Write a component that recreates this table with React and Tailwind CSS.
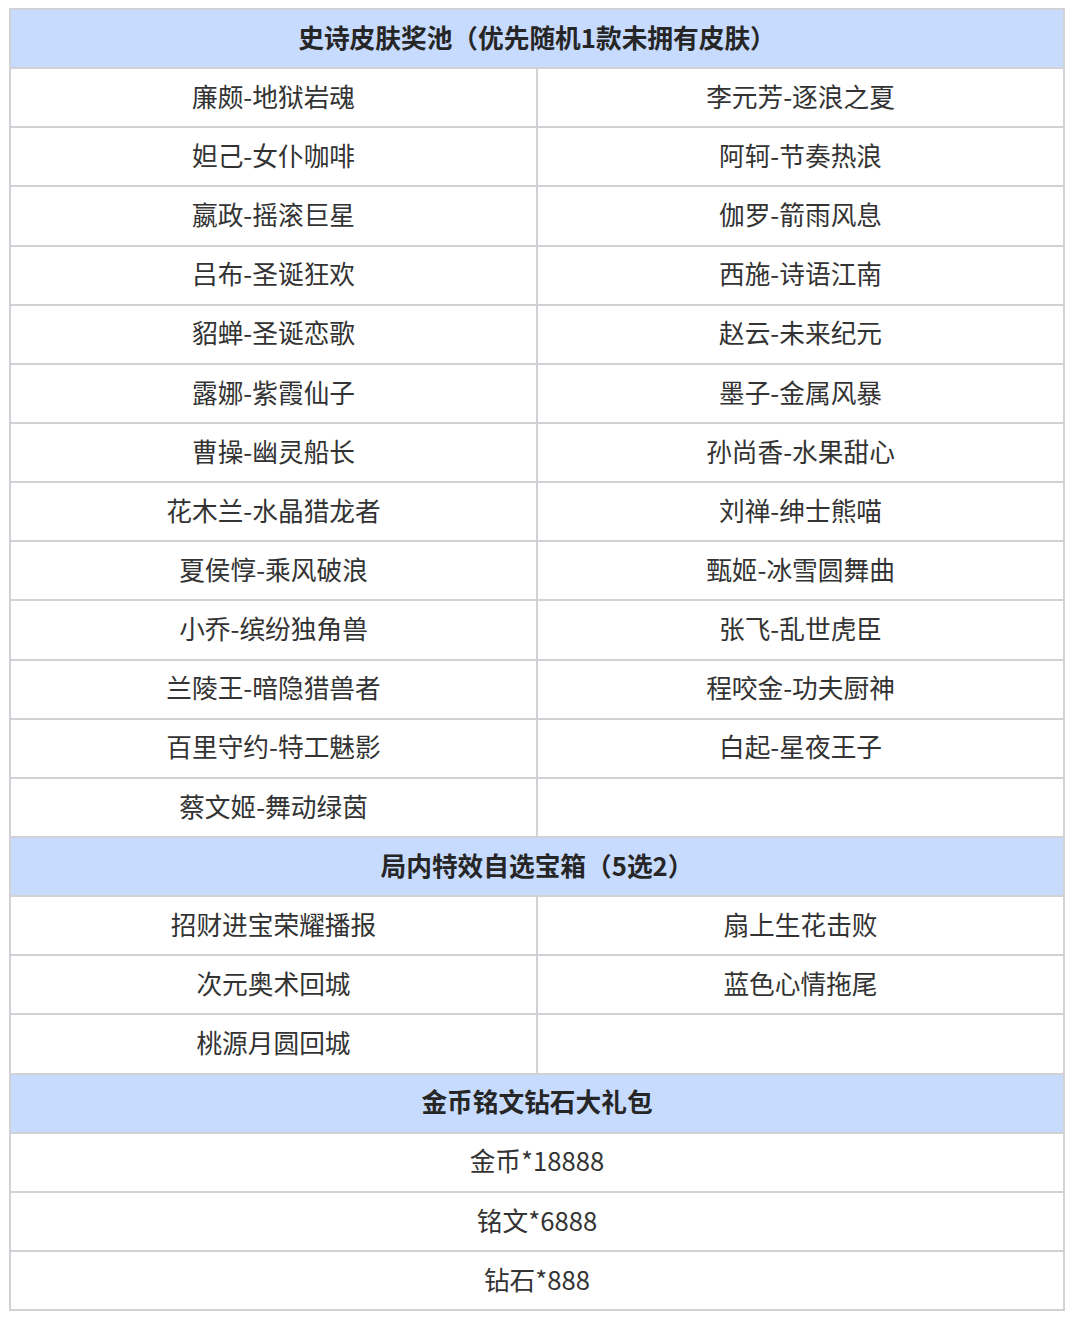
const skins = [
  ["廉颇-地狱岩魂", "李元芳-逐浪之夏"],
  ["妲己-女仆咖啡", "阿轲-节奏热浪"],
  ["嬴政-摇滚巨星", "伽罗-箭雨风息"],
  ["吕布-圣诞狂欢", "西施-诗语江南"],
  ["貂蝉-圣诞恋歌", "赵云-未来纪元"],
  ["露娜-紫霞仙子", "墨子-金属风暴"],
  ["曹操-幽灵船长", "孙尚香-水果甜心"],
  ["花木兰-水晶猎龙者", "刘禅-绅士熊喵"],
  ["夏侯惇-乘风破浪", "甄姬-冰雪圆舞曲"],
  ["小乔-缤纷独角兽", "张飞-乱世虎臣"],
  ["兰陵王-暗隐猎兽者", "程咬金-功夫厨神"],
  ["百里守约-特工魅影", "白起-星夜王子"],
  ["蔡文姬-舞动绿茵", ""],
];

const effects = [
  ["招财进宝荣耀播报", "扇上生花击败"],
  ["次元奥术回城", "蓝色心情拖尾"],
  ["桃源月圆回城", ""],
];

const gifts = ["金币*18888", "铭文*6888", "钻石*888"];

const cell = "border-2 border-[#d2d2d6] text-center align-middle pb-[4px]";

const Header = ({ children }) => (
  <tr className="h-[59.15px]">
    <td colSpan={2} className={`${cell} bg-[#c6dbfd] font-bold text-[#262626]`}>
      {children}
    </td>
  </tr>
);

const App = () => {
  return (
    <div
      className="bg-white pl-[9px] pt-[8px] text-[25.7px] leading-none text-[#333]"
      style={{ fontFamily: '"Noto Sans CJK SC", "Noto Sans", sans-serif' }}
    >
      <table className="w-[1056px] border-collapse table-fixed">
        <tbody>
          <Header>史诗皮肤奖池（优先随机1款未拥有皮肤）</Header>
          {skins.map(([a, b], i) => (
            <tr key={i} className="h-[59.15px]">
              <td className={cell}>{a}</td>
              <td className={cell}>{b}</td>
            </tr>
          ))}
          <Header>局内特效自选宝箱（5选2）</Header>
          {effects.map(([a, b], i) => (
            <tr key={i} className="h-[59.15px]">
              <td className={cell}>{a}</td>
              <td className={cell}>{b}</td>
            </tr>
          ))}
          <Header>金币铭文钻石大礼包</Header>
          {gifts.map((g, i) => (
            <tr key={i} className="h-[59.15px]">
              <td colSpan={2} className={cell}>{g}</td>
            </tr>
          ))}
        </tbody>
      </table>
    </div>
  );
};

export default App;
